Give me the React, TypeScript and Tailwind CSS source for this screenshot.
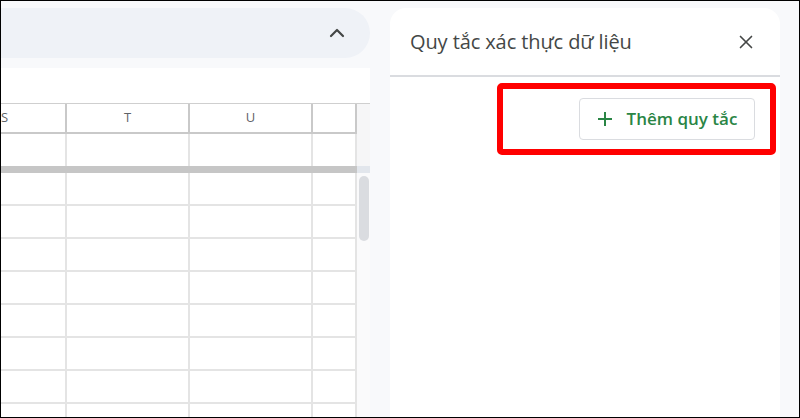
import { ChevronUp, X } from "lucide-react";

const bodyRows = [0, 1, 2, 3, 4, 5, 6, 7];

function Row({ tall = 33, last = false }: { tall?: number; last?: boolean }) {
  return (
    <div
      className={`flex shrink-0 ${last ? "" : "border-b-2 border-[#e4e4e4]"} ${tall === 32 ? "h-[32px]" : "h-[33px]"}`}
    >
      <div className="w-[66px] border-r-2 border-[#e4e4e4]" />
      <div className="w-[123px] border-r-2 border-[#e4e4e4]" />
      <div className="w-[123px] border-r-2 border-[#e4e4e4]" />
      <div className="w-[44px] border-r-2 border-[#e4e4e4]" />
    </div>
  );
}

function Sheet() {
  return (
    <div className="flex-1 flex flex-col bg-white mt-[10px] overflow-hidden">
      {/* empty band above the column header */}
      <div className="h-[35px] shrink-0" />

      <div className="flex flex-1 border-t border-[#cfcfcf] overflow-hidden">
        <div className="flex flex-col w-[356px]">
          {/* column header */}
          <div className="flex h-[30px] shrink-0 border-b-2 border-[#c9c9c9] text-[13px] text-[#5f6368] font-['Open_Sans',sans-serif]">
            <div className="w-[66px] border-r-2 border-[#c9c9c9] overflow-hidden">
              <div className="w-[123px] -ml-[58px] h-full flex items-center justify-center">S</div>
            </div>
            <div className="w-[123px] border-r-2 border-[#c9c9c9] flex items-center justify-center">T</div>
            <div className="w-[123px] border-r-2 border-[#c9c9c9] flex items-center justify-center">U</div>
            <div className="w-[44px] border-r-2 border-[#c9c9c9]" />
          </div>

          <Row tall={32} last />
          {/* frozen row divider */}
          <div className="h-[7px] shrink-0 bg-[#c6c6c6]" />

          {bodyRows.map((r) => (
            <Row key={r} />
          ))}
        </div>

        {/* vertical scrollbar */}
        <div className="w-[13px] flex flex-col bg-[#fafafb]">
          <div className="h-[62px] shrink-0 bg-[#f6f6f7]" />
          <div className="h-[7px] shrink-0 bg-[#e2e6ec]" />
          <div className="mt-[3px] h-[65px] w-[10px] rounded-full bg-[#dadce0] self-center" />
        </div>
      </div>
    </div>
  );
}

function RulesPanel() {
  return (
    <div className="relative mt-[7px] w-[390px] flex flex-col bg-white rounded-t-[16px] font-['Open_Sans',sans-serif]">
      <div className="h-[69px] shrink-0 flex items-center justify-between pl-[20px] pr-[23px] border-b-2 border-[#dadce0]">
        <span className="text-[20px] text-[#444746] tracking-[-0.1px]">Quy tắc xác thực dữ liệu</span>
        <X size={22} strokeWidth={1.8} className="text-[#444746]" />
      </div>

      <div className="flex justify-end pr-[25px] pt-[21px]">
        <button className="h-[42px] w-[176px] flex items-center justify-center gap-[14px] rounded-[4px] border border-[#dadce0] bg-white text-[17px] font-semibold text-[#2a8545]">
          <svg width="16" height="16" viewBox="0 0 16 16" fill="none">
            <path d="M8 1v14M1 8h14" stroke="#2a8545" strokeWidth="2" />
          </svg>
          Thêm quy tắc
        </button>
      </div>

      {/* highlight annotation */}
      <div className="absolute left-[107px] top-[75px] w-[279px] h-[72px] rounded-[5px] border-[6px] border-[#ff0000] pointer-events-none" />
    </div>
  );
}

export default function App() {
  return (
    <div className="w-[800px] h-[418px] border border-black bg-[#f8f9fb] flex overflow-hidden">
      <div className="w-[369px] flex flex-col">
        <div className="mt-[7px] h-[50px] shrink-0 bg-[#eff2f7] rounded-r-[25px] flex items-center justify-end pr-[21px]">
          <ChevronUp size={24} strokeWidth={2.2} className="text-[#444746]" />
        </div>
        <Sheet />
      </div>
      <div className="w-[20px]" />
      <RulesPanel />
    </div>
  );
}
